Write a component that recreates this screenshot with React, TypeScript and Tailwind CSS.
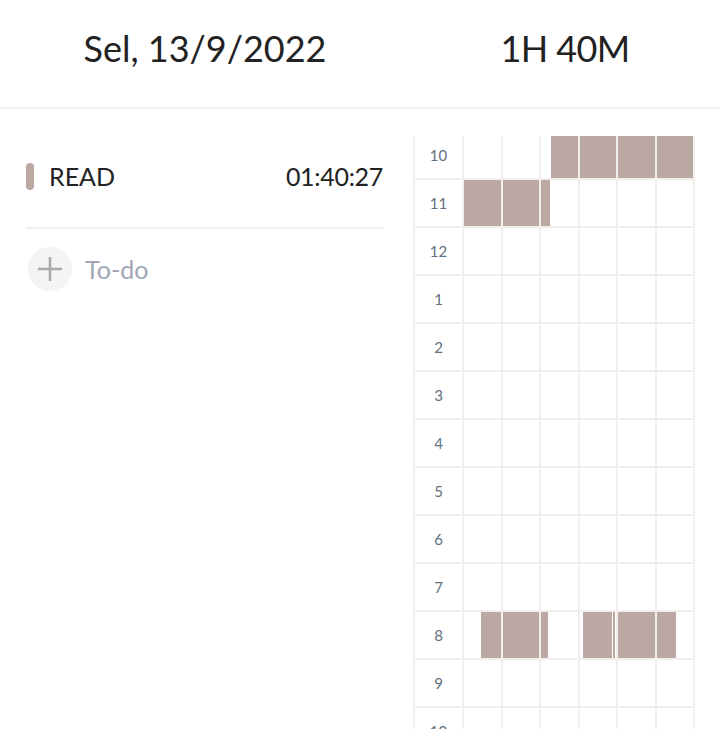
import React from "react";

const hours = [10, 11, 12, 1, 2, 3, 4, 5, 6, 7, 8, 9, 10, 11];

type Seg = { left: number; width?: number };
const blocks: Record<string, Seg[]> = {
  "0-2": [{ left: 10 }],
  "0-3": [{ left: 0 }],
  "0-4": [{ left: 0 }],
  "0-5": [{ left: 0 }],
  "1-0": [{ left: 0 }],
  "1-1": [{ left: 0 }],
  "1-2": [{ left: 0, width: 9 }],
  "10-0": [{ left: 17 }],
  "10-1": [{ left: 0 }],
  "10-2": [{ left: 0, width: 7 }],
  "10-3": [{ left: 3, width: 29 }, { left: 33.5, width: 1.5 }],
  "10-4": [{ left: 0 }],
  "10-5": [{ left: 0, width: 19.5 }],
};

export default function App() {
  const font = { fontFamily: "Lato, 'Noto Sans', sans-serif" };
  return (
    <div className="w-[720px] h-[729px] overflow-hidden bg-white text-[#222222]" style={font}>
      {/* header */}
      <div className="flex h-[109px] border-b-2 border-[#f1f1f1]">
        <div className="w-[410px] flex items-center justify-center pb-[12px]">
          <span className="text-[36px] leading-none tracking-[0px]">Sel, 13/9/2022</span>
        </div>
        <div className="flex-1 flex items-center justify-center pb-[12px]">
          <span className="text-[36px] leading-none tracking-[-0.6px]">1H 40M</span>
        </div>
      </div>

      <div className="flex">
        {/* left */}
        <div className="w-[410px] shrink-0 px-[26px] pt-[47px]">
          <div className="flex items-center h-[40px] pr-[1px]">
            <div className="w-[8px] h-[27px] rounded-full bg-[#bba8a2]" />
            <span className="ml-[15px] text-[25px] leading-none">READ</span>
            <span className="ml-auto text-[25px] leading-none tracking-[-0.3px]">01:40:27</span>
          </div>
          <div className="mt-[31px] h-[2px] w-[358px] bg-[#f1f1f1]" />
          <div className="mt-[18px] flex items-center">
            <div className="ml-[2px] w-[44px] h-[44px] rounded-full bg-[#f4f4f5] flex items-center justify-center">
              <svg width="26" height="26" viewBox="0 0 26 26">
                <path d="M13 1v24M1 13h24" stroke="#a9a9a9" strokeWidth="2.6" />
              </svg>
            </div>
            <span className="ml-[13px] text-[25px] leading-none text-[#a0a7b3]">To-do</span>
          </div>
        </div>

        {/* right */}
        <div className="flex-1 pl-[3px] pt-[27px]">
          <div className="h-[593px] overflow-hidden">
            <div className="-mt-[4px] w-[282px] border-l-2 border-[#f1eeee]">
              {hours.map((h, r) => (
                <div key={r} className="grid grid-cols-[49px_repeat(6,minmax(0,1fr))] h-[48px]">
                  <div className="border-r-2 border-b-2 border-[#f1eeee] flex items-center justify-center text-[15px] text-[#607080] pt-[1px]">
                    {h}
                  </div>
                  {[0, 1, 2, 3, 4, 5].map((c) => (
                    <div key={c} className="relative border-r-2 border-b-2 border-[#f1eeee]">
                      {(blocks[`${r}-${c}`] || []).map((s, i) => (
                        <div
                          key={i}
                          className="absolute top-0 bottom-0 bg-[#bba8a2]"
                          style={s.width !== undefined ? { left: s.left, width: s.width } : { left: s.left, right: 0 }}
                        />
                      ))}
                    </div>
                  ))}
                </div>
              ))}
            </div>
          </div>
        </div>
      </div>
    </div>
  );
}
